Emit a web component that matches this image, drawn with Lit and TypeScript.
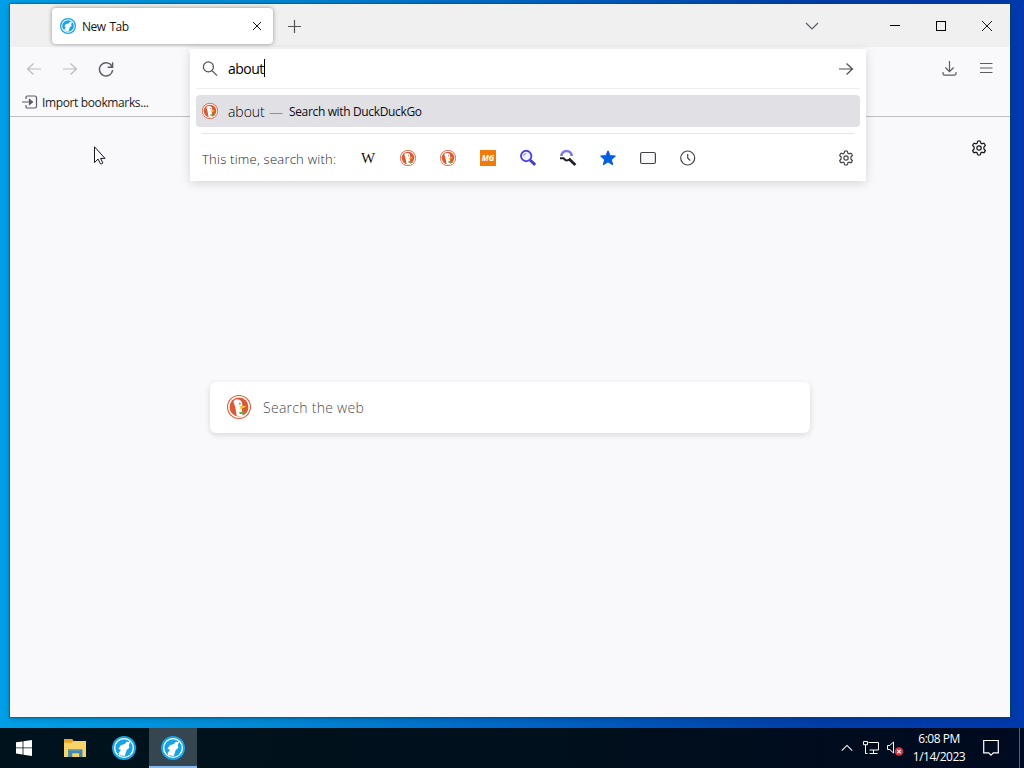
import { LitElement, html, css, svg } from "lit";
import { customElement, property } from "lit/decorators.js";

const gear = "M6.7 1.2 Q8 .7 9.3 1.2 L9.8 3.1 L11 3.8 L12.9 3.2 Q14 4.1 14.3 5.5 L12.9 7 V9 L14.3 10.5 Q14 11.9 12.9 12.8 L11 12.2 L9.8 12.9 L9.3 14.8 Q8 15.3 6.7 14.8 L6.2 12.9 L5 12.2 L3.1 12.8 Q2 11.9 1.7 10.5 L3.1 9 V7 L1.7 5.5 Q2 4.1 3.1 3.2 L5 3.8 L6.2 3.1 Z";

const shapes: Record<string, unknown> = {
  back: svg`<path d="M15 8H1.5M7.5 2.5 1.5 8l6 5.5"/>`,
  forward: svg`<path d="M1 8h13.5M8.5 2.5l6 5.5-6 5.5"/>`,
  reload: svg`<path stroke-width="1.4" d="M14 5.5A6.6 6.6 0 1 0 14.6 9M14.6 1.2v5H9.6" />`,
  close: svg`<path stroke-width="1" d="m4 4 8 8M12 4l-8 8"/>`,
  plus: svg`<path d="M8.5 2v13M2 8.5h13"/>`,
  down: svg`<path d="m2 5 6 6 6-6"/>`,
  up: svg`<path d="m2 11 6-6 6 6"/>`,
  search: svg`<circle cx="6.4" cy="5.9" r="5"/><path d="m10 9.6 5 5"/>`,
  importing: svg`<path d="M4 5V3.3Q4 2 5.3 2h7.4Q14.5 2 14.5 3.5v9q0 1.5-1.8 1.5H5.3Q4 14 4 12.7V11M0 8h10"/><path fill="currentColor" d="M7.5 5.5 10.5 8l-3 2.5z"/>`,
  download: svg`<path d="M8.5 0v10.5M4.4 6.5l4.1 4.1 4.1-4.1M2 11v1.5q0 1.7 1.7 1.7h9.6q1.7 0 1.7-1.7V11"/>`,
  menu: svg`<path stroke-width="1" d="M2 2.5h12.5M2 7h12.5M2 11.5h12.5"/>`,
  gear: svg`<path d=${gear}/><circle cx="8" cy="8" r="2.2"/>`,
  tabs: svg`<rect x=".6" y="2.5" width="14.8" height="11" rx="1.5" fill="#f8f8f8"/>`,
  clock: svg`<circle cx="7.7" cy="8" r="7"/><path d="M7.7 4v4l2.5 2.5"/>`,
  star: svg`<path fill="#0560df" stroke="#0560df" stroke-linejoin="round" d="m8 1 2 4.7 5.2.4-4 3.4 1.3 5L8 11.8l-4.5 2.7 1.3-5-4-3.4 5.2-.4z"/>`,
  lens: svg`<circle cx="6.2" cy="6" r="5.2" stroke="#4a46d8" stroke-width="1.9" fill="#f1f1ff"/><path d="M3.5 6Q4 3.7 6.2 3.4" stroke="#9a9af0"/><path d="m10 10 5.2 4.8" stroke="#4441c9" stroke-width="3"/>`,
  darklens: svg`<path d="M1.5 6A5 5 0 0 1 11.6 6" stroke="#7a77e6" stroke-width="2.6"/><path d="M0 8.2H3.4Q6.5 12.4 10.6 8.6" stroke="#20202c" stroke-width="2"/><path d="m9.6 9.6 5.8 5.4" stroke="#20202c" stroke-width="2.8"/>`,
  minimize: svg`<path d="M3 7.5h10" stroke="#000" stroke-width="1"/>`,
  maximize: svg`<rect x="3.5" y="3.5" width="9" height="9" stroke="#000" stroke-width="1"/>`,
  exit: svg`<path d="m3 3 10 10M13 3 3 13" stroke="#000" stroke-width=".9"/>`,
  windows: svg`<path fill="#fff" stroke="none" d="M0 2.3 6.6 1.4v6.1H0zM7.4 1.3 16 0v7.5H7.4zM0 8.3h6.6v6.2L0 13.6zM7.4 8.3H16V16l-8.6-1.3z"/>`,
  folder: svg`<g stroke="none"><path fill="#e6a52b" d="M0 0h6l1 1.5h9V12H0z"/><path fill="#f8d36a" d="M0 2.8h5.5L7 1.5h9V13H0z"/><path fill="#4488ab" d="M3 7.5h10.4V13H11v-2.6H6V13H3z"/><path fill="#68a3bd" d="M4 7.5h8v1H4z"/></g>`,
  network: svg`<path stroke-width="1" d="M5.5 2.5h10v7.5h-9M10.5 10v3M6.5 13.5h8M.5 1.5h4v3.2h-4zM2.5 4.7v8.8h2"/>`,
  volume: svg`<path stroke-width="1" d="M.5 5.5h2.2L6.5 2v11L2.7 9.5H.5z"/><circle cx="12" cy="11.5" r="4.3" fill="#d83643" stroke="none"/><path d="m10.3 9.8 3.4 3.4m0-3.4-3.4 3.4" stroke="#fff"/>`,
  note: svg`<path d="M.7 .5h14.6v12.3h-5L8 15.2l-2.3-2.4h-5z"/>`,
  pointer: svg`<path fill="#fff" stroke="#151520" stroke-width="1" d="M.5.8v15.7l3.6-3.4 2.3 4.6q1.5 1 2.4-.8l-2.2-4.5H11z"/>`,
  duck: svg`<g stroke="none"><circle cx="8" cy="8" r="8" fill="#dc5934"/><circle cx="8" cy="8" r="7.3" fill="#fff"/><circle cx="8" cy="8" r="6.3" fill="#dc5934"/><path fill="#fff" d="M4.3 4.6Q5 2.5 7 3q2.9.1 3.2 3.2L9.7 9l1 4.6Q8.5 14.5 6.5 13.8L5.5 8z"/><path fill="#f7c52f" d="M8.6 7.7q2-1 4.2-.2-1.6 1.8-4.2 1.6z"/><path fill="#65a944" d="m8 11.5 3.4-.7v2.2l-2.8-.3z"/><circle cx="8.6" cy="5.8" r=".5" fill="#284b65"/></g>`,
  wolf: svg`<g stroke="none"><circle cx="8" cy="8" r="8" fill="#16a4e7"/><circle cx="8" cy="8" r="6.7" fill="#fff"/><circle cx="8" cy="8" r="5.8" fill="#16a4e7"/><path fill="#fff" d="M12.3 3.3 11.2 6.2l.4 1.7-1.8 1.4-1.3 4.1-3.6-.5-.6-1.3 1.7-2.4L4.3 8.5l1.6-2.4 2.7-.7 1.3-1.7.8.4z"/></g>`,
};

@customElement("ui-icon")
export class UiIcon extends LitElement {
  @property() name = "";
  @property() box = "0 0 16 16";
  static styles = css`
    :host { display: block; width: 16px; height: 16px; flex: none; }
    svg { display: block; width: 100%; height: 100%; fill: none; stroke: currentColor; stroke-width: var(--line, 1.2); overflow: visible; }
  `;
  render() { return html`<svg viewBox=${this.box}>${shapes[this.name]}</svg>`; }
}

@customElement("app-root")
export class AppRoot extends LitElement {
  static styles = css`
    :host { display: block; width: 1024px; height: 768px; overflow: hidden; font-family: "Open Sans", "Noto Sans", sans-serif; color: #15141a; }
    * { box-sizing: border-box; }
    .desktop { width: 1024px; height: 768px; display: flex; flex-direction: column; background: linear-gradient(90deg, #009fe8 0, #0089d6 25%, #0063c4 52%, #003da9 80%, #0039ad 100%); }
    .space { height: 728px; padding: 4px 14px 10px 10px; }
    .window { position: relative; width: 1000px; height: 713px; background: #f9f9fb; box-shadow: 0 0 1px 1px #0546, 0 1px 5px #0236; }
    .titlebar { height: 43px; background: #f0f0f0; display: flex; align-items: center; padding: 0 15px 0 42px; }
    .tab { width: 221px; height: 36px; margin-top: 1px; padding: 0 8px; background: #fff; border-radius: 4px; box-shadow: 0 0 4px #0006; display: flex; align-items: center; gap: 6px; font-size: 12px; }
    .title { flex: 1; letter-spacing: -.45px; word-spacing: 1px; padding-top: 1px; }
    .plus { margin: 1px 0 0 13px; color: #555; }
    .tabmenu { margin: 0 0 0 auto; color: #5b5b66; }
    .controls { display: flex; gap: 30px; margin-left: 67px; }
    .toolbar { height: 43px; display: flex; align-items: center; padding: 0 16px; gap: 20px; color: #5b5b66; }
    .dim { color: #bbbbc0; }
    .right { display: flex; gap: 21px; margin-left: auto; }
    .bookmarks { height: 27px; border-bottom: 1px solid #bfbfc3; padding: 0 13px 2px 12px; display: flex; align-items: center; gap: 4px; font-size: 12px; color: #222; letter-spacing: -.37px; }
    .bookmarks ui-icon { color: #5b5b66; }
    .content { height: 600px; position: relative; display: flex; justify-content: center; padding-top: 265px; }
    .settings { position: absolute; right: 23px; top: 23px; }
    .pointer { position: absolute; left: 84px; top: 29px; width: 13px; height: 20px; }
    .websearch { width: 600px; height: 51px; background: #fff; border-radius: 6px; box-shadow: 0 2px 6px #00000022; display: flex; align-items: center; gap: 12px; padding: 0 17px; font-size: 14px; font-weight: 300; color: #4c4c54; letter-spacing: .28px; }
    .websearch ui-icon { width: 24px; height: 24px; margin-top: -2px; }
    .popup { position: absolute; left: 180px; top: 45px; width: 676px; height: 132px; background: #fff; box-shadow: 0 2px 10px #00000026; padding: 0 6px; font-size: 14px; }
    .input { height: 40px; display: flex; align-items: center; padding: 0 6px; gap: 10px; border-bottom: 1px solid #eeeeef; }
    .input ui-icon { color: #4d4d55; }
    .typed { line-height: 20px; height: 19px; flex: 1; display: flex; letter-spacing: -.5px; color: #000; }
    .caret { width: 1px; height: 18px; background: #000; }
    .result { height: 32px; margin-top: 6px; background: #e0e0e5; border-radius: 4px; display: flex; align-items: center; padding: 0 6px; gap: 10px; color: #202028; }
    .query { font-weight: 300; color: #000; letter-spacing: -.05px; width: 37px; padding-top: 1px; }
    .detail { font-size: 12px; color: #0c0c18; letter-spacing: -.35px; margin-left: -4px; padding-top: 1px; }
    .dash { margin-left: -6px; color: #555; font-weight: 300; }
    .engines { height: 48px; margin: 6px 6px 0; border-top: 1px solid #e6e6e9; display: flex; align-items: center; font-size: 13px; color: #25252d; font-weight: 300; }
    .label { width: 158px; white-space: nowrap; letter-spacing: .24px; padding-top: 2px; }
    .choices { display: flex; gap: 24px; flex: 1; color: #44444b; }
    .wiki { width: 16px; height: 16px; text-align: center; font: 15px/17px "Liberation Serif", serif; color: #111; }
    .mg { width: 16px; height: 16px; background: #f07b0b; color: #fff; font: italic 700 8px/16px "Open Sans", sans-serif; text-align: center; }
    .engines > ui-icon { color: #44444b; }
    .taskbar { height: 40px; background: linear-gradient(90deg, #00131d, #00101c 50%, #000a20); display: flex; color: #fff; }
    .task { width: 50px; display: flex; justify-content: center; align-items: center; flex: none; }
    .task ui-icon { width: 24px; height: 24px; }
    .task.start { width: 49px; padding-right: 2px; }
    .task .win { width: 16px; height: 16px; }
    .task .folder { width: 22px; height: 22px; margin: 3px 0 0 1px; }
    .task.active { background: #354650; border-bottom: 2px solid #83b9e8; width: 48px; padding-top: 2px; }
    .tray { margin-left: auto; display: flex; align-items: center; padding-right: 20px; }
    .tray .chevron { width: 14px; height: 14px; margin-right: 9px; }
    .tray .volume { margin-left: 8px; }
    .time { width: 61px; margin: 0 14px 0 5px; font-size: 12px; line-height: 18px; text-align: center; letter-spacing: -.5px; white-space: nowrap; padding-left: 1px; }
    .peek { width: 5px; border-left: 1px solid #56606e; }
  `;
  render() {
    return html`<div class="desktop">
      <div class="space"><main class="window">
        <header class="titlebar">
          <div class="tab"><ui-icon name="wolf"></ui-icon><span class="title">New Tab</span><ui-icon name="close"></ui-icon></div>
          <ui-icon class="plus" name="plus"></ui-icon><ui-icon class="tabmenu" name="down"></ui-icon>
          <div class="controls"><ui-icon name="minimize"></ui-icon><ui-icon name="maximize"></ui-icon><ui-icon name="exit"></ui-icon></div>
        </header>
        <nav class="toolbar"><ui-icon class="dim" name="back"></ui-icon><ui-icon class="dim" name="forward"></ui-icon><ui-icon name="reload"></ui-icon><div class="right"><ui-icon name="download"></ui-icon><ui-icon name="menu"></ui-icon></div></nav>
        <div class="bookmarks"><ui-icon name="importing"></ui-icon><span>Import bookmarks...</span></div>
        <section class="content">
          <div class="websearch"><ui-icon name="duck"></ui-icon><span>Search the web</span></div>
          <ui-icon class="settings" name="gear"></ui-icon><ui-icon class="pointer" name="pointer" box="0 0 13 20"></ui-icon>
        </section>
        <section class="popup">
          <div class="input"><ui-icon name="search"></ui-icon><div class="typed"><span>about</span><i class="caret"></i></div><ui-icon name="forward"></ui-icon></div>
          <div class="result"><ui-icon name="duck"></ui-icon><span class="query">about</span><span class="dash">—</span><span class="detail">Search with DuckDuckGo</span></div>
          <div class="engines"><span class="label">This time, search with:</span><div class="choices"><span class="wiki">W</span><ui-icon name="duck"></ui-icon><ui-icon name="duck"></ui-icon><span class="mg">MG</span>${["lens", "darklens", "star", "tabs", "clock"].map((n) => html`<ui-icon name=${n}></ui-icon>`)}</div><ui-icon name="gear"></ui-icon></div>
        </section>
      </main></div>
      <footer class="taskbar"><div class="task start"><ui-icon class="win" name="windows"></ui-icon></div><div class="task"><ui-icon class="folder" name="folder"></ui-icon></div><div class="task"><ui-icon name="wolf"></ui-icon></div><div class="task active"><ui-icon name="wolf"></ui-icon></div>
        <div class="tray"><ui-icon class="chevron" name="up"></ui-icon><ui-icon name="network"></ui-icon><ui-icon class="volume" name="volume"></ui-icon><div class="time">6:08 PM<br>1/14/2023</div><ui-icon name="note"></ui-icon></div><div class="peek"></div>
      </footer>
    </div>`;
  }
}
